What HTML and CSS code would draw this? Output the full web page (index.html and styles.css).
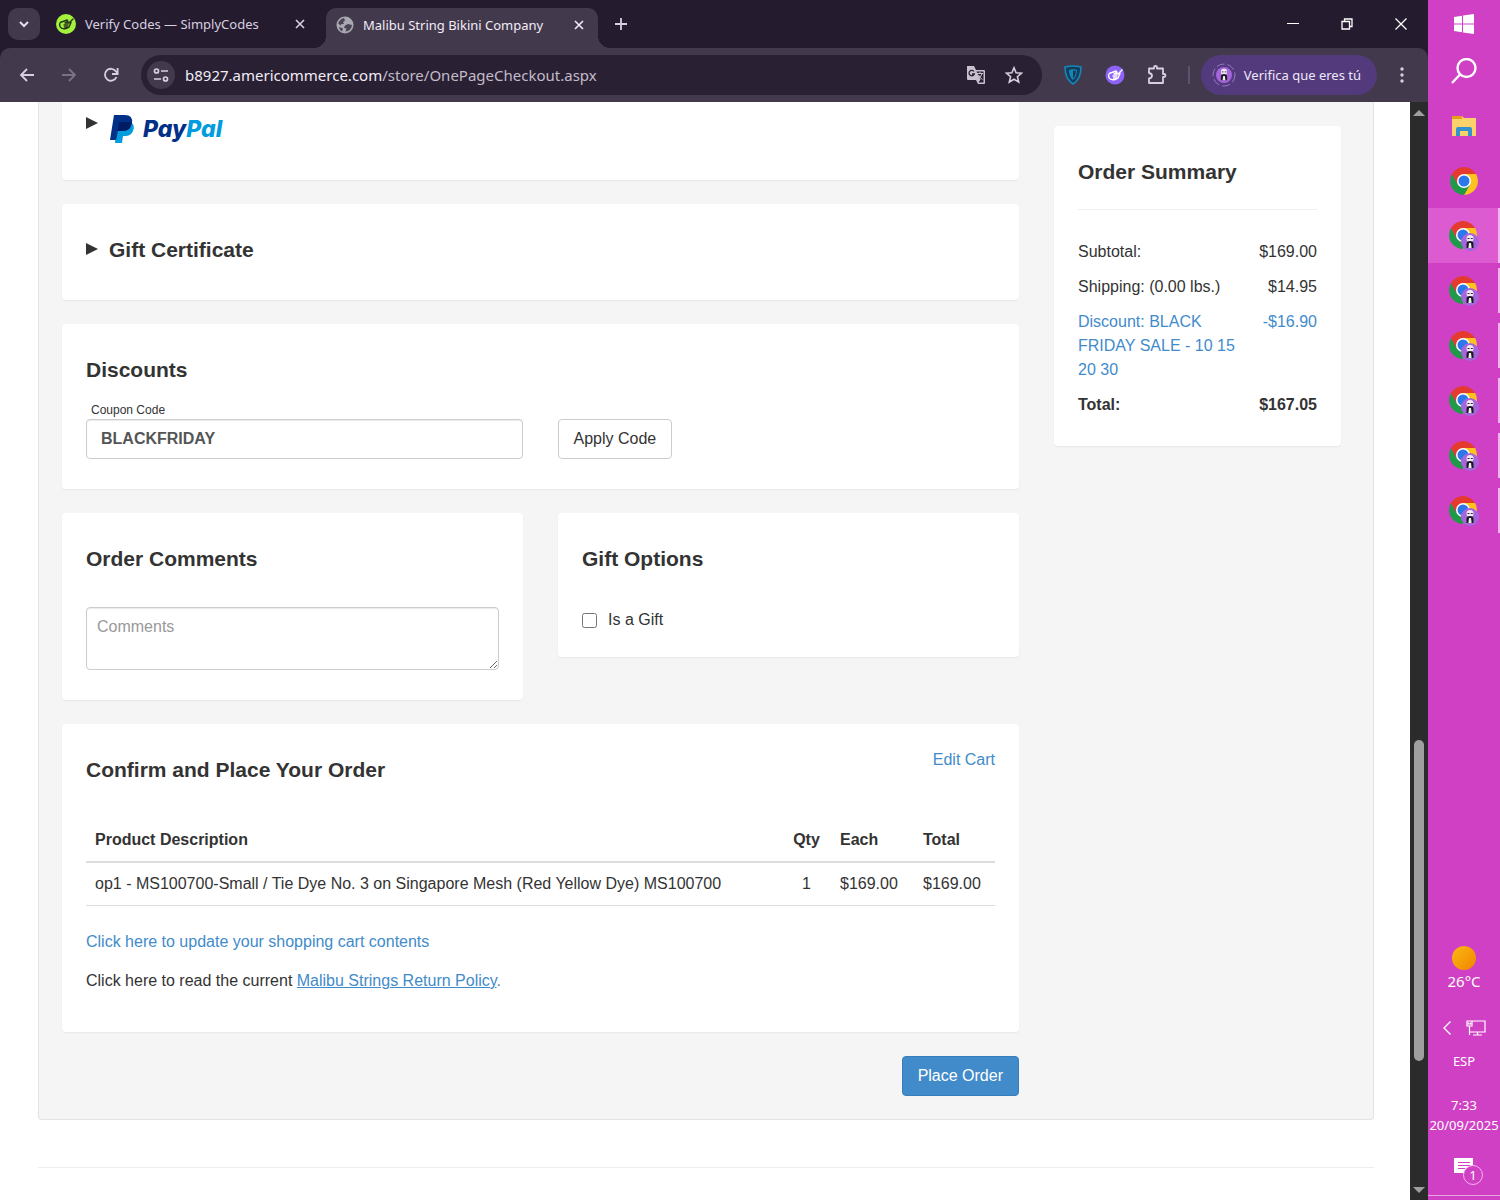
FILE: index.html
```html
<!DOCTYPE html>
<html lang="en">
<head>
  <meta charset="UTF-8">
  <meta name="viewport" content="width=device-width, initial-scale=1.0">
  <title>Malibu String Bikini Company</title>
  <link rel="stylesheet" href="styles.css">
</head>
<body>

<!-- shared icons -->
<svg class="sprite" aria-hidden="true">
  <symbol id="chrome" viewBox="0 0 28 28">
    <path d="M14 7H26.1A14 14 0 0 1 14 28L20 17.5z" fill="#fcc31e"/>
    <path d="M1.9 7A14 14 0 0 0 14 28L20 17.5 8 17.5z" fill="#1e9a48"/>
    <path d="M1.9 7A14 14 0 0 1 26.1 7H14L8 17.5z" fill="#e53a2e"/>
    <circle cx="14" cy="14" r="7" fill="#fff"/>
    <circle cx="14" cy="14" r="5.500" fill="#2b78ea"/>
  </symbol>
  <symbol id="avatar" viewBox="0 0 18 18">
    <circle cx="9" cy="9" r="9" fill="#a566dc"/>
    <circle cx="9" cy="5.500" r="3.500" fill="#f1e8f4"/>
    <path d="M6.500 5.500h2M9.800 5.500h2" stroke="#33283c" stroke-width="1"/>
    <path d="M5.500 15V11q0-3 3.500-3t3.500 3v4z" fill="#1d1822"/>
    <path d="M8 10h2l.6 5H7.400z" fill="#eee"/>
  </symbol>
  <symbol id="hand" viewBox="0 0 20 20">
    <path d="M4 12.500Q2.500 8 7 7.500l4-1.500 1 1.500-3 1.500h4l4-4M4 12.500q1.500 3 6 2l3-1.500 2-4.500M8 11h4M8.500 13h3" fill="none" stroke="currentColor" stroke-width="1.400" stroke-linecap="round" stroke-linejoin="round"/>
  </symbol>
  <symbol id="close" viewBox="0 0 12 12">
    <path d="M2 2l8 8M10 2l-8 8" stroke="currentColor" stroke-width="1.600"/>
  </symbol>
</svg>

<div class="browser">
  <header class="tab-strip">
    <button class="tab-search" aria-label="Search tabs">
      <svg width="12" height="12" viewBox="0 0 12 12"><path d="M2 4l4 4 4-4" fill="none" stroke="#e6deee" stroke-width="2"/></svg>
    </button>
    <div class="tab">
      <svg class="tab-icon lime" width="20" height="20"><circle cx="10" cy="10" r="10" fill="#a4f23c"/><use href="#hand"/></svg>
      <span class="tab-title">Verify Codes — SimplyCodes</span>
      <button class="tab-close" aria-label="Close tab"><svg width="12" height="12"><use href="#close"/></svg></button>
    </div>
    <div class="tab active">
      <svg class="tab-icon" width="18" height="18" viewBox="0 0 18 18">
        <circle cx="9" cy="9" r="8.500" fill="#a9a8b1"/>
        <path d="M2 7q3-4.500 6-5l1 2.500-2 1.500 1 2H5.500l-1 1.500zM9 9.500l3-1.500 4 1q-.5 4-4 6l-2.500.5 1-3L8 12zM3 11l4 1.500-1 3q-2.500-1.500-3-4.500z" fill="#4b4256"/>
      </svg>
      <span class="tab-title">Malibu String Bikini Company</span>
      <button class="tab-close" aria-label="Close tab"><svg width="12" height="12"><use href="#close"/></svg></button>
    </div>
    <button class="new-tab" aria-label="New tab">
      <svg width="14" height="14" viewBox="0 0 14 14"><path d="M7 1v12M1 7h12" stroke="currentColor" stroke-width="1.800"/></svg>
    </button>
    <div class="window-controls">
      <button aria-label="Minimize"><svg width="12" height="12"><path d="M0 5.500h12" stroke="#fff"/></svg></button>
      <button aria-label="Restore"><svg width="12" height="12" fill="none" stroke="#fff" stroke-width="1.300"><path d="M1 3.500h7.500V11H1zM3.500 3.500V1H11v7.500H8.500"/></svg></button>
      <button aria-label="Close"><svg width="12" height="12"><path d="M.5.5l11 11M11.500.5l-11 11" stroke="#fff" stroke-width="1.300"/></svg></button>
    </div>
  </header>

  <nav class="toolbar">
    <button class="tool" aria-label="Back"><svg width="16" height="16" viewBox="0 0 16 16"><path d="M15 8H2M8 2L2 8l6 6" fill="none" stroke="currentColor" stroke-width="1.800"/></svg></button>
    <button class="tool disabled" aria-label="Forward"><svg width="16" height="16" viewBox="0 0 16 16"><path d="M1 8h13M8 2l6 6-6 6" fill="none" stroke="currentColor" stroke-width="1.800"/></svg></button>
    <button class="tool" aria-label="Reload"><svg width="16" height="16" viewBox="0 0 16 16"><path d="M13.500 10A6 6 0 1 1 13 4.500L14.500 6" fill="none" stroke="currentColor" stroke-width="1.800"/><path d="M14.600 1v6H9" fill="none" stroke="currentColor" stroke-width="1.800"/></svg></button>

    <div class="omnibox">
      <button class="site-info" aria-label="Site information">
        <svg width="16" height="16" viewBox="0 0 16 16" fill="none" stroke="currentColor" stroke-width="1.700"><circle cx="3.500" cy="4" r="2"/><path d="M8 4h7M1 12h7"/><circle cx="12.500" cy="12" r="2"/></svg>
      </button>
      <span class="url">b8927.americommerce.com<span class="path">/store/OnePageCheckout.aspx</span></span>
      <button class="omni-btn" aria-label="Translate">
        <svg width="20" height="20" viewBox="0 0 20 20"><path d="M1 1h7l2 4h8q1 0 1 1v12q0 1-1 1h-6l-2-4H2q-1 0-1-1z" fill="#c9c1cf"/><path d="M10.500 6.500h7v11h-5l2-3z" fill="#292133"/><path d="M11 8.500h6M14 7v1.500M16 8.500q-1 4-4 5.500M12.500 10q1.500 3 4 4.500" fill="none" stroke="#c9c1cf"/><path d="M8 6.500a2.700 2.700 0 1 0 .3 2.500H6" fill="none" stroke="#292133" stroke-width="1.300"/></svg>
      </button>
      <button class="omni-btn" aria-label="Bookmark">
        <svg width="18" height="18" viewBox="0 0 18 18"><path d="M9 1.800l2.100 5 5.400.4-4.100 3.500 1.300 5.300L9 13.200 4.300 16l1.300-5.300-4.100-3.500 5.400-.4z" fill="none" stroke="#d6cedd" stroke-width="1.600"/></svg>
      </button>
    </div>

    <button class="tool" aria-label="VPN shield"><svg width="18" height="20" viewBox="0 0 18 20"><path d="M1 2q8-2 16 0 0 12-8 17Q1 14 1 2z" fill="#153e5c" stroke="#1487ba" stroke-width="1.600"/><path d="M5 5q4-1.500 8 0 0 7-4 10-4-3-4-10z" fill="#1487ba"/><path d="M9 5.500q2 0 3 .5 0 5-3 7.500z" fill="#153e5c"/></svg></button>
    <button class="tool violet" aria-label="SimplyCodes"><svg width="20" height="20"><circle cx="10" cy="10" r="9.500" fill="#8d62f5"/><use href="#hand"/></svg></button>
    <button class="tool" aria-label="Extensions"><svg width="20" height="20" viewBox="0 0 20 20"><path d="M2 3.500h5V2.500a1.500 1.500 0 0 1 3 0v1h6V9h1a1.500 1.500 0 0 1 0 3h-1v6H2v-4.500q3-.5 3-2.700T2 8z" fill="none" stroke="currentColor" stroke-width="1.800" stroke-linejoin="round"/></svg></button>
    <span class="divider"></span>
    <button class="profile">
      <svg width="24" height="24" viewBox="0 0 24 24"><circle cx="12" cy="12" r="11" fill="none" stroke="#9a78c6" stroke-dasharray="8 3"/><use href="#avatar" x="4" y="4" width="16" height="16"/></svg>
      Verifica que eres tú
    </button>
    <button class="tool menu" aria-label="Menu"><svg width="4" height="18" viewBox="0 0 4 18" fill="currentColor"><circle cx="2" cy="3" r="1.700"/><circle cx="2" cy="9" r="1.700"/><circle cx="2" cy="15" r="1.700"/></svg></button>
  </nav>

  <div class="viewport">
    <div class="page">
      <div class="checkout">
        <main class="steps">
          <section class="card payment">
            <details>
              <summary>
                <svg class="arrow" width="12" height="12"><path d="M0 0l12 6-12 6z" fill="#333"/></svg>
                <svg width="25" height="30" viewBox="0 0 25 30">
                  <path d="M8 9h15q3 3 1 8-2 5-8 5h-2l-1 7H6z" fill="#009cde"/>
                  <path d="M5 1h11q8 0 7 8-2 8-10 8H9L7 26H1z" fill="#003087"/>
                  <path d="M10 8h12.500q.5 9-9.500 9H8.700z" fill="#001c64"/>
                </svg>
                <span class="paypal">Pay<span class="pal">Pal</span></span>
              </summary>
            </details>
          </section>

          <section class="card">
            <details>
              <summary>
                <svg class="arrow" width="12" height="12"><path d="M0 0l12 6-12 6z" fill="#333"/></svg>
                <h2>Gift Certificate</h2>
              </summary>
            </details>
          </section>

          <section class="card">
            <h2>Discounts</h2>
            <div class="coupon">
              <div class="coupon-field">
                <label for="coupon">Coupon Code</label>
                <input type="text" id="coupon" value="BLACKFRIDAY">
              </div>
              <button class="btn">Apply Code</button>
            </div>
          </section>

          <div class="card-row">
            <section class="card">
              <h2>Order Comments</h2>
              <textarea class="comments" placeholder="Comments" aria-label="Comments"></textarea>
            </section>
            <section class="card">
              <h2>Gift Options</h2>
              <div class="check">
                <input type="checkbox" id="gift">
                <label for="gift">Is a Gift</label>
              </div>
            </section>
          </div>

          <section class="card">
            <div class="card-head">
              <h2>Confirm and Place Your Order</h2>
              <a href="#">Edit Cart</a>
            </div>
            <table class="items">
              <thead>
                <tr><th>Product Description</th><th class="qty">Qty</th><th class="each">Each</th><th class="total">Total</th></tr>
              </thead>
              <tbody>
                <tr><td>op1 - MS100700-Small / Tie Dye No. 3 on Singapore Mesh (Red Yellow Dye) MS100700</td><td class="qty">1</td><td>$169.00</td><td>$169.00</td></tr>
              </tbody>
            </table>
            <p><a href="#">Click here to update your shopping cart contents</a></p>
            <p>Click here to read the current <a class="policy" href="#"><u>Malibu Strings Return Policy</u>.</a></p>
          </section>

          <div class="actions">
            <button class="btn primary">Place Order</button>
          </div>
        </main>

        <aside class="card summary">
          <h2>Order Summary</h2>
          <hr>
          <dl>
            <div><dt>Subtotal:</dt><dd>$169.00</dd></div>
            <div><dt>Shipping: (0.00 lbs.)</dt><dd>$14.95</dd></div>
            <div class="discount"><dt>Discount: BLACK FRIDAY SALE - 10 15 20 30</dt><dd>-$16.90</dd></div>
            <div class="grand"><dt>Total:</dt><dd>$167.05</dd></div>
          </dl>
        </aside>
      </div>
      <hr class="page-end">
    </div>
    <div class="scrollbar">
      <svg width="12" height="6"><path d="M0 6l6-6 6 6z" fill="#9f9f9f"/></svg>
      <span class="thumb"></span>
      <svg class="down" width="12" height="6"><path d="M0 0l6 6 6-6z" fill="#9f9f9f"/></svg>
    </div>
  </div>
</div>

<div class="taskbar">
  <button class="start" aria-label="Start"><svg width="20" height="20" viewBox="0 0 20 20" fill="#fff"><path d="M0 3l8-1.200v7.700H0zM9 1.600L20 0v9.500H9zM0 10.500h8v7.700L0 17zM9 10.500h11V20L9 18.400z"/></svg></button>
  <button class="search" aria-label="Search"><svg width="26" height="26" viewBox="0 0 26 26" fill="none" stroke="#fff" stroke-width="2.400"><circle cx="15.500" cy="10" r="9"/><path d="M9 16.500L1 25"/></svg></button>
  <button class="app" aria-label="File Explorer">
    <svg width="26" height="22" viewBox="0 0 26 22"><path d="M1 1h10l2 2h12v18H1z" fill="#fbd26a"/><path d="M1 1h10v3H1z" fill="#e5a01b"/><path d="M5 21v-7q0-2 2-2h12q2 0 2 2v7h-4v-5H9v5z" fill="#3692cf"/></svg>
  </button>
  <button class="app" aria-label="Chrome"><svg width="28" height="28"><use href="#chrome"/></svg></button>
  <button class="app open current" aria-label="Chrome window"><svg width="32" height="32"><use href="#chrome" x="2" y="1" width="28" height="28"/><use href="#avatar" x="14" y="13" width="18" height="18"/></svg></button>
  <button class="app open" aria-label="Chrome window"><svg width="32" height="32"><use href="#chrome" x="2" y="1" width="28" height="28"/><use href="#avatar" x="14" y="13" width="18" height="18"/></svg></button>
  <button class="app open" aria-label="Chrome window"><svg width="32" height="32"><use href="#chrome" x="2" y="1" width="28" height="28"/><use href="#avatar" x="14" y="13" width="18" height="18"/></svg></button>
  <button class="app open" aria-label="Chrome window"><svg width="32" height="32"><use href="#chrome" x="2" y="1" width="28" height="28"/><use href="#avatar" x="14" y="13" width="18" height="18"/></svg></button>
  <button class="app open" aria-label="Chrome window"><svg width="32" height="32"><use href="#chrome" x="2" y="1" width="28" height="28"/><use href="#avatar" x="14" y="13" width="18" height="18"/></svg></button>
  <button class="app open" aria-label="Chrome window"><svg width="32" height="32"><use href="#chrome" x="2" y="1" width="28" height="28"/><use href="#avatar" x="14" y="13" width="18" height="18"/></svg></button>

  <div class="tray">
    <div class="weather"><span class="sun"></span>26°C</div>
    <div class="tray-icons">
      <svg width="8" height="14" viewBox="0 0 8 14"><path d="M7.500.5L1 7l6.500 6.500" fill="none" stroke="#fff" stroke-width="1.300"/></svg>
      <svg width="20" height="16" viewBox="0 0 20 16" fill="none" stroke="#fff" stroke-width="1.200"><path d="M6 1h13v11H4M11.500 12v3M7 15h9M1 1h5v5H1zM3.500 6v9M2.500 2.500v1.500h2V2.500"/></svg>
    </div>
    <div class="lang">ESP</div>
    <div class="clock"><span>7:33</span><span>20/09/2025</span></div>
    <button class="notify" aria-label="Notifications">
      <svg width="20" height="20" viewBox="0 0 20 20"><path d="M0 0h19v15h-5v4l-5-4H0z" fill="#fff"/><path d="M4 4.500h12M4 7.500h12M4 10.500h7" stroke="#d040c4" stroke-width="1.200"/></svg>
      <span class="badge">1</span>
    </button>
    <div class="show-desktop"></div>
  </div>
</div>

</body>
</html>
```
FILE: styles.css
```css
* {
  box-sizing: border-box;
}
body {
  margin: 0;
  height: 100vh;
  display: flex;
  overflow: hidden;
  background: #fff;
  color: #333;
  font-family: "Liberation Sans", Arial, sans-serif;
  font-size: 16px;
  line-height: 24px;
}
button {
  font: inherit;
  color: inherit;
  background: none;
  border: none;
  padding: 0;
  cursor: pointer;
}
svg {
  display: block;
  flex: none;
}
.sprite {
  position: absolute;
  width: 0;
  height: 0;
}
a {
  color: #428bca;
  text-decoration: none;
}

/* browser window */
.browser {
  flex: 1;
  min-width: 0;
  display: flex;
  flex-direction: column;
  background: #241c2e;
}
.tab-strip,
.toolbar {
  display: flex;
  align-items: center;
  flex: none;
  font-family: "Noto Sans", sans-serif;
  color: #d8cfe0;
}
.tab-strip {
  height: 48px;
  padding-left: 8px;
}
.tab-search {
  width: 32px;
  height: 32px;
  border-radius: 10px;
  background: #42394d;
  display: flex;
  align-items: center;
  justify-content: center;
}
.tab {
  display: flex;
  align-items: center;
  width: 272px;
  height: 40px;
  padding: 0 5px 0 16px;
  gap: 9px;
}
.tab-title {
  flex: 1;
  font-size: 13px;
  white-space: nowrap;
}
.tab-close {
  width: 14px;
  display: flex;
  justify-content: center;
}
.tab.active {
  position: relative;
  align-self: flex-end;
  margin-left: 14px;
  padding: 0 12px 6px 10px;
  background: #42394d;
  border-radius: 10px 10px 0 0;
  color: #f2ecf7;
}
/* flared feet of the active tab */
.tab.active::before,
.tab.active::after {
  content: "";
  position: absolute;
  bottom: 0;
  width: 12px;
  height: 12px;
}
.tab.active::before {
  left: -12px;
  background: radial-gradient(circle at 0 0, #241c2e 12px, #42394d 12px);
}
.tab.active::after {
  right: -12px;
  background: radial-gradient(circle at 100% 0, #241c2e 12px, #42394d 12px);
}
.lime {
  color: #26331a;
}
.violet {
  color: #fff;
}
.new-tab {
  width: 46px;
  display: flex;
  justify-content: center;
}
.window-controls {
  margin-left: auto;
  display: flex;
}
.window-controls button {
  width: 54px;
  height: 48px;
  display: flex;
  align-items: center;
  justify-content: center;
}
.toolbar {
  height: 54px;
  padding: 0 5px 0 6px;
  background: #42394d;
  border-radius: 10px 10px 0 0;
}
.tool {
  width: 42px;
  height: 40px;
  flex: none;
  display: flex;
  align-items: center;
  justify-content: center;
}
.disabled {
  color: #7c7287;
}
.omnibox {
  flex: 1;
  height: 40px;
  margin: 0 10px 0 9px;
  padding: 0 9px 0 6px;
  display: flex;
  align-items: center;
  border-radius: 20px;
  background: #292133;
}
.site-info {
  width: 28px;
  height: 28px;
  margin-right: 10px;
  border-radius: 14px;
  background: #42394d;
  display: flex;
  align-items: center;
  justify-content: center;
}
.url {
  flex: 1;
  font-size: 15px;
  color: #f2ecf7;
}
.path {
  color: #c3bbca;
}
.omni-btn {
  width: 38px;
  display: flex;
  justify-content: center;
}
.divider {
  width: 2px;
  height: 18px;
  margin: 0 11px 0 10px;
  background: #5e516f;
}
.profile {
  height: 40px;
  padding: 0 16px 0 11px;
  display: flex;
  align-items: center;
  gap: 8px;
  border-radius: 20px;
  background: #523a7c;
  color: #efe6fa;
  font-size: 13px;
}
.menu {
  margin-left: 4px;
}

/* page */
.viewport {
  flex: 1;
  min-height: 0;
  display: flex;
  background: #fff;
}
.page {
  flex: 1;
  min-width: 0;
  overflow: hidden;
  padding: 0 36px 0 38px;
}
.checkout {
  display: grid;
  grid-template-columns: minmax(0, 957fr) minmax(0, 287fr);
  align-items: start;
  gap: 35px;
  padding: 0 32px 23px 23px;
  background: #f5f5f5;
  border: 1px solid #e3e3e3;
  border-top: none;
  border-radius: 0 0 4px 4px;
}
.steps {
  display: flex;
  flex-direction: column;
  gap: 24px;
}
.card {
  padding: 24px;
  background: #fff;
  border-radius: 4px;
  box-shadow: 0 1px 2px rgba(0, 0, 0, 0.06);
}
.card h2 {
  margin: 10px 0 14px;
  font-size: 21px;
  line-height: 24px;
}
summary {
  display: flex;
  align-items: center;
  list-style: none;
  cursor: pointer;
}
.arrow {
  margin: 0 11px 6px 0;
}
.payment {
  padding: 10px 24px 34px;
  border-radius: 0 0 4px 4px;
}
.payment summary {
  height: 34px;
}
.payment .arrow {
  margin-bottom: 12px;
}
.paypal {
  margin-left: 9px;
  font: italic 800 23px Inter, sans-serif;
  color: #003087;
}
.pal {
  color: #009cde;
}
.coupon {
  display: flex;
  align-items: flex-end;
  gap: 35px;
  padding: 5px 0 6px;
}
.coupon-field {
  width: calc(50% - 18px);
}
.coupon-field label {
  display: block;
  padding-left: 5px;
  font-size: 12px;
  line-height: 18px;
}
.coupon-field input {
  display: block;
  width: 100%;
  height: 40px;
  padding: 0 14px;
  border: 1px solid #ccc;
  border-radius: 4px;
  box-shadow: inset 0 1px 1px rgba(0, 0, 0, 0.08);
  font: bold 16px "Liberation Sans", Arial, sans-serif;
  color: #555;
}
.btn {
  height: 40px;
  padding: 0 15px;
  border: 1px solid #ccc;
  border-radius: 4px;
  background: #fff;
  color: #333;
}
.primary {
  background: #428bca;
  border-color: #357ebd;
  color: #fff;
}
.card-row {
  display: grid;
  grid-template-columns: 1fr 1fr;
  align-items: start;
  gap: 35px;
}
.comments {
  display: block;
  width: 100%;
  height: 63px;
  margin: 36px 0 6px;
  padding: 7px 10px;
  border: 1px solid #ccc;
  border-radius: 4px;
  box-shadow: inset 0 1px 1px rgba(0, 0, 0, 0.08);
  font: inherit;
}
.comments::placeholder {
  color: #999;
}
.check {
  display: flex;
  align-items: center;
  gap: 11px;
  height: 26px;
  margin-top: 36px;
}
.check input {
  width: 15px;
  height: 15px;
  margin: 0;
}
.card-head {
  display: flex;
  justify-content: space-between;
  margin-bottom: 23px;
}
.items {
  width: 100%;
  margin-bottom: 24px;
  border-collapse: collapse;
}
.items th,
.items td {
  padding: 9px;
  text-align: left;
  border-bottom: 1px solid #ddd;
}
.items th {
  border-bottom-width: 2px;
}
.items .qty {
  width: 49px;
  text-align: center;
}
.items .each {
  width: 83px;
}
.items .total {
  width: 81px;
}
.card p {
  margin: 0 0 15px;
}
.actions {
  display: flex;
  justify-content: flex-end;
}
.summary {
  margin-top: 24px;
  padding-bottom: 29px;
}
.summary hr {
  margin: 25px 0 30px;
}
hr {
  border: none;
  border-top: 1px solid #eee;
}
.summary dl {
  margin: 0;
  display: flex;
  flex-direction: column;
  gap: 11px;
}
.summary dl div {
  display: flex;
  justify-content: space-between;
}
.summary dt {
  max-width: 70%;
}
.summary dd {
  margin: 0;
}
.discount {
  color: #428bca;
}
.grand {
  font-weight: bold;
}
.page-end {
  margin: 47px 0 0;
}

.scrollbar {
  width: 18px;
  display: grid;
  grid-template-rows: 21px 617fr 321fr 118fr 21px;
  justify-items: center;
  align-items: center;
  background: #2b2b2b;
}
.thumb {
  grid-row: 3;
  width: 10px;
  height: 100%;
  border-radius: 5px;
  background: #9f9f9f;
}
.down {
  grid-row: 5;
}

/* windows taskbar */
.taskbar {
  width: 72px;
  flex: none;
  display: flex;
  flex-direction: column;
  background: #d040c4;
  color: #fff;
  font-family: "Noto Sans", sans-serif;
  font-size: 13px;
  line-height: 20px;
}
.taskbar button {
  display: flex;
  align-items: center;
  justify-content: center;
}
.start {
  height: 48px;
}
.search {
  height: 46px;
  margin-bottom: 4px;
}
.app {
  height: 55px;
}
.open {
  height: 45px;
  margin: 5px 0;
}
.taskbar .open {
  border-right: 2px solid #f3b5ec;
}
.current {
  height: 55px;
  margin: 0;
  background: #dc5bd0;
}
.tray {
  margin-top: auto;
  display: flex;
  flex-direction: column;
  align-items: center;
}
.weather {
  display: flex;
  flex-direction: column;
  align-items: center;
  font-size: 15px;
}
.sun {
  width: 24px;
  height: 24px;
  margin-bottom: 1px;
  border-radius: 50%;
  background: linear-gradient(135deg, #fdb913, #f08400);
}
.tray-icons {
  display: flex;
  align-items: center;
  gap: 15px;
  height: 20px;
  margin: 27px 0 13px;
}
.clock {
  display: flex;
  flex-direction: column;
  align-items: center;
  margin: 24px 0 6px;
}
.notify {
  position: relative;
  width: 100%;
  height: 54px;
}
.badge {
  position: absolute;
  top: 24px;
  left: 35px;
  width: 20px;
  height: 20px;
  border: 1px solid #f3b5ec;
  border-radius: 50%;
  background: #d040c4;
  line-height: 18px;
}
.show-desktop {
  width: 100%;
  height: 5px;
  border-top: 1px solid #eba4e4;
}
```
